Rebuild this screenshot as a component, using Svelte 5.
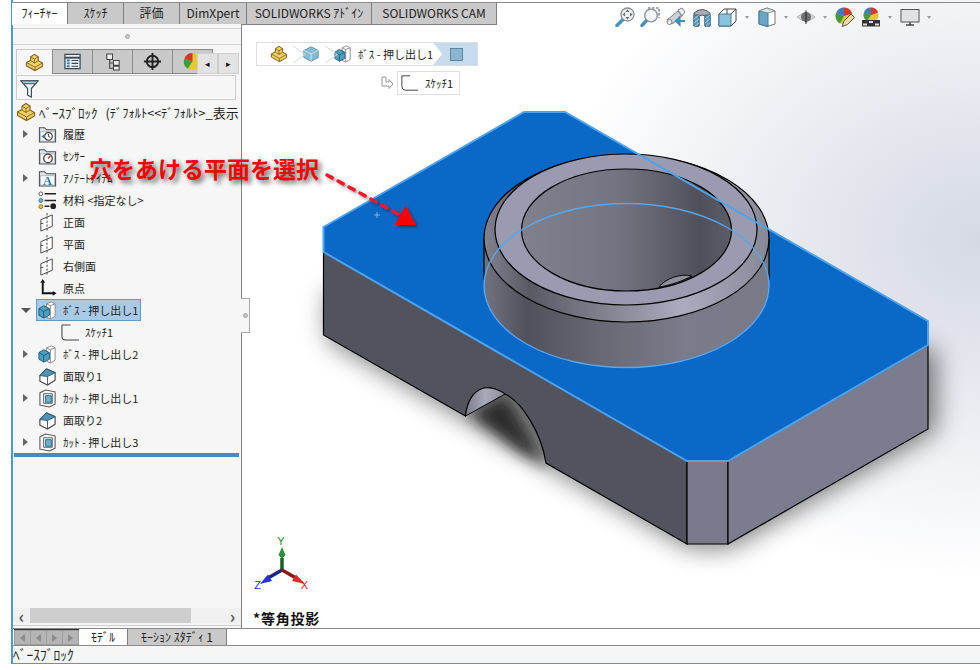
<script>
	const topTabs = ['ﾌｨｰﾁｬｰ', 'ｽｹｯﾁ', '評価', 'DimXpert', 'SOLIDWORKS ｱﾄﾞｲﾝ', 'SOLIDWORKS CAM'];
	const paneTabs = ['part', 'props', 'config', 'target', 'pie'];

	const rows = [
		{ label: '履歴', icon: 'fhist', caret: 'r' },
		{ label: 'ｾﾝｻｰ', icon: 'fsens' },
		{ label: 'ｱﾉﾃｰﾄｱｲﾃﾑ', icon: 'fanno', caret: 'r' },
		{ label: '材料 <指定なし>', icon: 'material' },
		{ label: '正面', icon: 'plane' },
		{ label: '平面', icon: 'plane' },
		{ label: '右側面', icon: 'plane' },
		{ label: '原点', icon: 'origin' },
		{ label: 'ﾎﾞｽ - 押し出し1', icon: 'boss', caret: 'd', selected: true },
		{ label: 'ｽｹｯﾁ1', icon: 'sketch', child: true },
		{ label: 'ﾎﾞｽ - 押し出し2', icon: 'boss', caret: 'r' },
		{ label: '面取り1', icon: 'chamfer' },
		{ label: 'ｶｯﾄ - 押し出し1', icon: 'cut', caret: 'r' },
		{ label: '面取り2', icon: 'chamfer' },
		{ label: 'ｶｯﾄ - 押し出し3', icon: 'cut', caret: 'r' }
	];

	const tools = [
		{ icon: 'zoomfit', w: 25 },
		{ icon: 'zoomarea', w: 26 },
		{ icon: 'prev', w: 26 },
		{ icon: 'section', w: 26 },
		{ icon: 'orient', w: 20, caret: true },
		{ icon: 'display', w: 20, caret: true },
		{ icon: 'eye', w: 20, caret: true },
		{ icon: 'appear', w: 26 },
		{ icon: 'scene', w: 20, caret: true },
		{ icon: 'monitor', w: 20, caret: true }
	];
</script>

{#snippet ic(k)}
	<svg class="ic" viewBox="0 0 20 20">
		{#if k === 'part'}
			<path d="M1.500 10 L6 7.500 L6 4 L10 1.500 L14 4 L14 8 L18.500 10.500 L18.500 14 L10.500 18.500 L1.500 13.500Z" fill="#f2cf62" stroke="#7d6220" stroke-width="1.100" />
			<path d="M6 4 L10 6.500 L14 4 M10 6.500 L10 10.500 L6 8 M10 10.500 L14 8 M1.500 10 L10.500 15 L18.500 10.500 M10.500 15 L10.500 18.500" fill="none" stroke="#7d6220" stroke-width="0.900" />
		{:else if k === 'props'}
			<rect x="2" y="2.500" width="16" height="15" fill="#e8eef4" stroke="#3c4a56" stroke-width="1.300" />
			<path d="M2 6 H18" stroke="#3c4a56" stroke-width="2" />
			<path d="M4 9 H7 M4 12 H7 M4 15 H7" stroke="#2c7fb0" stroke-width="2" />
			<path d="M9 9 H16 M9 12 H16 M9 15 H16" stroke="#3c4a56" stroke-width="1.200" />
		{:else if k === 'config'}
			<path d="M4 2 H10 V8 H4Z M11 9 H17 V14 H11Z M11 15 H17 V19 H11Z" fill="#eee" stroke="#444" stroke-width="1.100" />
			<path d="M7 8 V17 H11 M7 11.500 H11" fill="none" stroke="#444" stroke-width="1.100" />
		{:else if k === 'target'}
			<circle cx="10" cy="10" r="6" fill="none" stroke="#222" stroke-width="2" />
			<path d="M10 1 V19 M1 10 H19" stroke="#222" stroke-width="2" />
		{:else if k === 'pie'}
			<circle cx="10" cy="10" r="9" fill="#e8c92e" />
			<path d="M10 10 L10 1 A9 9 0 0 0 1.500 7Z" fill="#d9352a" />
			<path d="M10 10 L1.500 7 A9 9 0 0 0 5 17.500Z" fill="#3f9b3c" />
		{:else if k === 'fhist' || k === 'fsens' || k === 'fanno'}
			<path d="M1.500 18 V3 H7 L9 5 H18.500 V18Z" fill="#dfe3e8" stroke="#4b4f55" stroke-width="1.100" />
			<path d="M2.500 7 H17.500 V17 H2.500Z" fill="#f6f7f8" stroke="#8b9097" stroke-width="0.600" />
			{#if k === 'fhist'}
				<circle cx="11" cy="12" r="4" fill="#fff" stroke="#333" stroke-width="1.200" />
				<path d="M11 9.500 V12 L13 13" fill="none" stroke="#333" />
				<path d="M3.500 12 L7 9.500 V14.500Z" fill="#2d7fae" />
			{:else if k === 'fsens'}
				<circle cx="10.500" cy="12" r="4.500" fill="#fff" stroke="#333" stroke-width="1.300" />
				<path d="M10.500 12 L13 9.500" stroke="#d0392b" stroke-width="1.500" />
			{:else}
				<text x="10" y="17" class="ic-a">A</text>
			{/if}
		{:else if k === 'material'}
			<circle cx="3" cy="3" r="2" fill="#fff" stroke="#555" />
			<circle cx="3" cy="10" r="2" fill="#7fb6d8" stroke="#3a6f92" />
			<circle cx="3" cy="16.500" r="2" fill="#edc93c" stroke="#8a7414" />
			<path d="M7 3 H19 M7 10 H19 M7 16 H12" stroke="#222" stroke-width="1.600" />
			<circle cx="16" cy="16" r="3" fill="#222" />
		{:else if k === 'plane'}
			<path d="M3 7 L15 2 V14 L3 19Z" fill="#fff" stroke="#444" />
			<path d="M9.500 0 V20 M3 11 H6" stroke="#444" stroke-dasharray="2.500 1.500" />
		{:else if k === 'origin'}
			<path d="M5 2 V15 H18" fill="none" stroke="#111" stroke-width="2" />
			<path d="M5 0 L2.500 4 H7.500Z M19.500 15 L15.500 12.500 V17.500Z" fill="#111" />
		{:else if k === 'boss'}
			<path d="M9 3 L14 1 L18 3 V16 L13 19 L9 17Z" fill="#fff" stroke="#8a8a8a" />
			<path d="M13 5 V19 M9 3 L13 5 L18 3" fill="none" stroke="#8a8a8a" />
			<path d="M1 8 L6 5 L12 8 V15 L6 18 L1 15Z" fill="#4f9fc0" stroke="#1f5d7a" />
			<path d="M1 8 L6 11 L12 8 M6 11 V18" fill="none" stroke="#1f5d7a" />
		{:else if k === 'sketch'}
			<path d="M1 2 V14 Q1 18 5 18 H19 M1 2 H10" fill="none" stroke="#444" stroke-width="1.100" />
		{:else if k === 'chamfer'}
			<path d="M2 9 L9 2 L18 6 V14 L10 19 L2 15Z" fill="#fff" stroke="#444" stroke-width="1.200" />
			<path d="M2 9 L9 2 L18 6 L10 10Z" fill="#4f94b8" stroke="#2a5c78" />
			<path d="M10 10 V19" stroke="#555" />
		{:else if k === 'cut'}
			<path d="M2 4 L8 1 L18 3 V16 L12 19 L2 17Z" fill="#f6f6f6" stroke="#555" stroke-width="1.100" />
			<path d="M6 5 H15 V15 H6Z" fill="#fff" stroke="#555" />
			<path d="M8 7 H14 V14 H8Z" fill="#6fb0cd" stroke="#2a6a8a" />
		{:else if k === 'cube'}
			<path d="M2 6 L10 2 L18 6 V14 L10 18 L2 14Z" fill="#83bcd6" stroke="#5d93ad" />
			<path d="M2 6 L10 10 L18 6 M10 10 V18" fill="none" stroke="#d5e9f2" />
		{:else if k === 'square'}
			<rect x="3" y="3" width="14" height="14" fill="#8ab7cf" stroke="#4f7d96" />
		{:else if k === 'zoomfit'}
			<path d="M8 12.500 L2 18.500" stroke="#4b93b8" stroke-width="3.500" stroke-linecap="round" />
			<circle cx="12.500" cy="7.500" r="6.500" fill="#eef0f2" stroke="#87909a" stroke-width="1.300" />
			<path d="M12.500 2.500 L14.500 5 H10.500Z M12.500 12.500 L14.500 10 H10.500Z M7.500 7.500 L10 5.500 V9.500Z M17.500 7.500 L15 5.500 V9.500Z" fill="#666" />
		{:else if k === 'zoomarea'}
			<path d="M8 1 H19 V11" fill="none" stroke="#555" stroke-width="1.100" stroke-dasharray="2.500 1.500" />
			<path d="M7 13 L2 18.500" stroke="#4b93b8" stroke-width="3.500" stroke-linecap="round" />
			<circle cx="11" cy="8.500" r="6.300" fill="#f4f5f6" stroke="#87909a" stroke-width="1.300" />
		{:else if k === 'prev'}
			<path d="M1 13 L12 4 L16 9 L6 17Z" fill="#cfd2d5" stroke="#7a7f84" />
			<path d="M12 3 L16 1 L19 5 L16 9Z" fill="#eceeef" stroke="#7a7f84" />
			<circle cx="3.500" cy="15" r="2.500" fill="#eee" stroke="#7a7f84" />
			<path d="M10 14 H19 M10 14 L13.500 10.500 V17.500Z" fill="#3f8fb8" stroke="#3f8fb8" stroke-width="2" />
		{:else if k === 'section'}
			<path d="M2 6 Q10 -1 18 6 V19 H13 V9 Q10 7 7 9 V19 H2Z" fill="#a7acb1" stroke="#555" />
			<path d="M2 8 H7 V19 H2Z M13 8 H18 V19 H13Z" fill="#5f9dbd" stroke="#2f6a8a" />
			<path d="M2 12 L7 8 M2 16 L7 12 M3 19 L7 16 M13 12 L18 8 M13 16 L18 12 M14 19 L18 16" stroke="#cfe5ef" stroke-width="0.700" />
		{:else if k === 'orient'}
			<path d="M1 7 L6 2 H18 V14 L13 19 H1Z" fill="#fff" stroke="#444" />
			<path d="M1 7 H13 V19 H1Z" fill="#8cc3dc" stroke="#3e7d9c" />
			<path d="M13 7 L18 2 M13 19 L18 14 M9 2 V7" stroke="#444" />
		{:else if k === 'display'}
			<path d="M2 4 L10 1 L18 4 V17 L10 19.500 L2 17Z" fill="#fff" stroke="#777" />
			<path d="M2 4 L11 6 V19.500 L2 17Z" fill="#6aa7c6" stroke="#3f7a98" />
			<path d="M2 4 L10 1 L18 4 L11 6Z" fill="#d4e6ef" stroke="#777" stroke-width="0.700" />
		{:else if k === 'eye'}
			<path d="M1 10 Q10 2 19 10 Q10 18 1 10Z" fill="#d8d8d8" stroke="#b5b5b5" />
			<circle cx="10" cy="10" r="5" fill="#707070" />
			<path d="M10 3.500 V17" stroke="#2a2a2a" stroke-width="1.100" />
		{:else if k === 'appear'}
			<circle cx="9" cy="9" r="8.500" fill="#e7c52e" />
			<path d="M9 9 L9 0.500 A8.500 8.500 0 0 1 17 6.500Z" fill="#d9352a" />
			<path d="M9 9 L9 0.500 A8.500 8.500 0 0 0 1 6.500Z" fill="#3d7dc4" />
			<path d="M9 9 L1 6.500 A8.500 8.500 0 0 0 5 16.500Z" fill="#3f9b3c" />
			<path d="M7 19.500 L9 14 L16 7 L19.500 10.500 L12.500 17.500Z" fill="#f0d9a0" stroke="#555" />
		{:else if k === 'scene'}
			<circle cx="10" cy="8" r="7.500" fill="#e7c52e" />
			<path d="M10 8 L10 0.500 A7.500 7.500 0 0 1 17 5.500Z" fill="#d9352a" />
			<path d="M10 8 L10 0.500 A7.500 7.500 0 0 0 3 5.500Z" fill="#3d7dc4" />
			<path d="M10 8 L3 5.500 A7.500 7.500 0 0 0 6 14Z" fill="#3f9b3c" />
			<path d="M1 13 H19 V19.500 H1Z" fill="#333" />
			<path d="M2 16.500 H6 V18.500 H2Z M8 14 H12 V16 H8Z M14 16.500 H18 V18.500 H14Z" fill="#ddd" />
		{:else if k === 'monitor'}
			<rect x="1" y="2.500" width="18" height="12.500" fill="#e2e2e2" stroke="#555" />
			<path d="M6 18 H14 M10 15 V18" stroke="#444" stroke-width="1.500" />
		{/if}
	</svg>
{/snippet}

<div class="page">
	<div class="app">
		<div class="main">
			<div class="topbar">
				<div class="tabs">
					{#each topTabs as tab, i}
						<div class="tab" class:active={i === 0} class:w1={i < 3} class:w2={i === 3} class:w3={i > 3}>{tab}</div>
					{/each}
				</div>
				<div class="tools">
					{#each tools as t}
						<div class="tool" style="width: {t.w}px">{@render ic(t.icon)}</div>
						{#if t.caret}<div class="tool-caret"></div>{/if}
					{/each}
				</div>
			</div>

			<div class="body">
				<aside class="side">
					<div class="grip"><span class="dot"></span></div>
					<div class="pane-tabs">
						{#each paneTabs as p, i}
							<div class="pane-tab" class:active={i === 0}>{@render ic(p)}</div>
						{/each}
						<div class="pane-arrows">
							<div class="pane-arrow">◂</div>
							<div class="pane-arrow">▸</div>
						</div>
					</div>
					<div class="filter">
						<svg class="funnel" viewBox="0 0 20 20">
							<path d="M1 2 H19 L12 10 V19 L8 17 V10Z" fill="#eef6fa" stroke="#3f4a52" stroke-width="1.200" />
							<path d="M1 2 H19 L16 5 H4Z" fill="#9ccbe2" stroke="#3f4a52" />
						</svg>
					</div>

					<div class="root-row">
						{@render ic('part')}
						<span class="root-label">ﾍﾞｰｽﾌﾞﾛｯｸ</span>
						<span class="root-config">(ﾃﾞﾌｫﾙﾄ&lt;&lt;ﾃﾞﾌｫﾙﾄ&gt;<em>_表示状態</em></span>
					</div>

					{#each rows as row}
						<div class="row" class:child={row.child}>
							<span class="caret">
								{#if row.caret === 'r'}<i class="tri-r"></i>{:else if row.caret === 'd'}<i class="tri-d"></i>{/if}
							</span>
							<span class="row-inner" class:selected={row.selected}>
								{@render ic(row.icon)}
								<span class="row-label">{row.label}</span>
							</span>
						</div>
					{/each}
					<div class="rollback"></div>

					<div class="hscroll">
						<span class="sc-arrow">‹</span>
						<div class="sc-track"><div class="sc-thumb"></div></div>
						<span class="sc-arrow">›</span>
					</div>
					<div class="side-foot"></div>
					<div class="side-notch"><span class="dot"></span></div>
				</aside>

				<div class="canvas">
					<svg class="scene" viewBox="242 24 738 604" width="738" height="604">
						<defs>
							<filter id="soft" x="-20%" y="-20%" width="140%" height="140%"><feGaussianBlur stdDeviation="13" /></filter>
							<filter id="soft2" x="-30%" y="-30%" width="160%" height="160%"><feGaussianBlur stdDeviation="7" /></filter>
							<filter id="arrowShadow" x="-30%" y="-30%" width="160%" height="160%"><feDropShadow dx="2" dy="2" stdDeviation="1.500" flood-color="#000" flood-opacity="0.400" /></filter>
							<linearGradient id="sideG" x1="484" x2="769" y1="0" y2="0" gradientUnits="userSpaceOnUse">
								<stop offset="0" stop-color="#72737f" />
								<stop offset="0.150" stop-color="#50515b" />
								<stop offset="0.400" stop-color="#676873" />
								<stop offset="0.700" stop-color="#7b7c8b" />
								<stop offset="1" stop-color="#797a88" />
							</linearGradient>
							<linearGradient id="rimG" x1="484" x2="769" y1="0" y2="0" gradientUnits="userSpaceOnUse">
								<stop offset="0" stop-color="#82838f" />
								<stop offset="0.160" stop-color="#585963" />
								<stop offset="0.420" stop-color="#81828f" />
								<stop offset="0.700" stop-color="#abacbe" />
								<stop offset="1" stop-color="#878897" />
							</linearGradient>
							<linearGradient id="holeG" x1="521" x2="732" y1="0" y2="0" gradientUnits="userSpaceOnUse">
								<stop offset="0" stop-color="#80818f" />
								<stop offset="0.450" stop-color="#747582" />
								<stop offset="0.850" stop-color="#4f505a" />
								<stop offset="1" stop-color="#5c5d68" />
							</linearGradient>
							<linearGradient id="archG" x1="466" x2="505" y1="0" y2="0" gradientUnits="userSpaceOnUse">
								<stop offset="0" stop-color="#7d7e8c" />
								<stop offset="0.500" stop-color="#a9aaba" />
								<stop offset="1" stop-color="#8d8e9d" />
							</linearGradient>
						</defs>

						<!-- ground shadow -->
						<path d="M328 290 L328 340 L690 548 L730 548 L936 430 L936 350Z" fill="#000" opacity="0.520" filter="url(#soft)" />
						<path d="M470 414 L505 396 L548 466 L520 452Z" fill="#1c1c1c" opacity="0.850" filter="url(#soft2)" />

						<!-- lower faces -->
						<path d="M323.500 252 L687 461 L687 544 L546 463 C541 432 522 402 505 394 C496 388 488 387 484 388 C473 391 467 402 465.500 416 L323.500 335Z" fill="#52535d" stroke="#000" stroke-width="1.200" />
						<path d="M465.500 416 C467 402 473 391 484 388 C492 387 499 390 505 394Z" fill="url(#archG)" stroke="#000" stroke-width="1" />
						<path d="M687 461 H728 V544 H687Z" fill="#797a8b" stroke="#000" stroke-width="1.200" />
						<path d="M728 461 L928 345 V429 L728 544Z" fill="#7b7c8e" stroke="#000" stroke-width="1.200" />

						<!-- selected top face -->
						<path d="M323.500 227 L524 112 H565 L928 321 V345 L728 461 H687 L323.500 252Z" fill="#0a68c7" />

						<!-- boss -->
						<ellipse cx="626.500" cy="285.500" rx="142.500" ry="82" fill="url(#sideG)" />
						<rect x="484" y="238" width="285" height="48" fill="url(#sideG)" />
						<path d="M484 238 V280 M769 238 V280" stroke="#000" stroke-width="1.200" />
						<ellipse cx="626.500" cy="238.500" rx="142.500" ry="83.500" fill="url(#rimG)" stroke="#000" stroke-width="1.200" />
						<ellipse cx="626" cy="229.500" rx="131" ry="75.500" fill="#9a9bb0" stroke="#000" stroke-width="1.200" />
						<ellipse cx="626.500" cy="230" rx="105" ry="61" fill="url(#holeG)" stroke="#000" stroke-width="1.200" />
						<path d="M659 287 C665 279 680 273 692 276 C682 281 672 285 659 287Z" fill="#8f909e" stroke="#000" stroke-width="0.900" />

						<!-- selection highlight -->
						<ellipse cx="626.500" cy="285.500" rx="142.500" ry="82" fill="none" stroke="#55a7f2" stroke-width="1.400" />
						<path d="M323.500 227 L524 112 H565 L928 321 V345 L728 461 H687 L323.500 252Z" fill="none" stroke="#4ea3ee" stroke-width="2" />
						<path d="M374 215 H380 M377 212 V218" stroke="#8cc4f5" stroke-width="0.800" />

						<!-- annotation arrow -->
						<g filter="url(#arrowShadow)">
							<path d="M327 175 L400 215" stroke="#f5152c" stroke-width="3.500" stroke-dasharray="6 6.500" stroke-linecap="round" fill="none" />
							<path d="M405.500 205.500 L416 225 H394.500Z" fill="#ff0000" />
						</g>

						<!-- triad -->
						<g>
							<path d="M282 570 V558" stroke="#135f22" stroke-width="3.500" />
							<path d="M282 547 L285.500 555 L282 559 L278.500 555Z" fill="#2f8f3c" />
							<path d="M282 570 L268 578" stroke="#1a2590" stroke-width="3.500" />
							<path d="M260 584 L268 574.500 L272 581Z" fill="#2530d8" />
							<path d="M282 570 L296 578" stroke="#8f1818" stroke-width="3.500" />
							<path d="M305 584 L296 574.500 L292 581Z" fill="#d82c2c" />
							<text x="281" y="545" class="axis y">Y</text>
							<text x="257.500" y="589" class="axis z">Z</text>
							<text x="304.500" y="589" class="axis x">X</text>
						</g>
					</svg>

					<div class="hud">
						<div class="crumbs">
							<span class="crumb">{@render ic('part')}</span>
							<i class="chev"></i>
							<span class="crumb">{@render ic('cube')}</span>
							<i class="chev"></i>
							<span class="crumb c3">{@render ic('boss')}<b>ﾎﾞｽ - 押し出し1</b></span>
							<span class="crumb last">{@render ic('square')}</span>
						</div>
						<div class="sub-crumb">
							<svg class="hop" viewBox="0 0 14 14"><path d="M2 1 H6 V6 H9 V3.500 L13 8 L9 12.500 V10 H2Z" fill="#fff" stroke="#999" /></svg>
							<div class="sketch-box">{@render ic('sketch')}<span>ｽｹｯﾁ1</span></div>
						</div>
					</div>

					<div class="view-name">*等角投影</div>
				</div>
			</div>

			<div class="bottom-tabs">
				<div class="nav-btns">
					<span class="nav-btn"><i class="nav-l"></i></span>
					<span class="nav-btn"><i class="nav-l"></i></span>
					<span class="nav-btn"><i class="nav-r"></i></span>
					<span class="nav-btn"><i class="nav-r"></i></span>
				</div>
				<div class="btab active">ﾓﾃﾞﾙ</div>
				<div class="btab">ﾓｰｼｮﾝ ｽﾀﾃﾞｨ 1</div>
			</div>
			<div class="status">ﾍﾞｰｽﾌﾞﾛｯｸ</div>
		</div>

		<div class="callout">穴をあける平面を選択</div>
	</div>
</div>

<style>
	:global(body) {
		margin: 0;
		background: #fff;
	}

	.page {
		width: 980px;
		height: 670px;
		overflow: hidden;
		font-family: "Noto Sans CJK JP", "Liberation Sans", sans-serif;
		color: #222;
	}

	.app {
		position: relative;
		margin-left: 11px;
		width: 969px;
		height: 664px;
		border-left: 2px solid #4a9bd4;
		border-bottom: 1px solid #4a9bd4;
		box-sizing: border-box;
	}

	.main {
		height: 100%;
		display: flex;
		flex-direction: column;
		background: radial-gradient(ellipse 430px 340px at 100% 240px, #d5d9e4, #fff);
	}

	/* top tabs + view toolbar */
	.topbar {
		display: flex;
		height: 22px;
		margin-top: 2px;
		flex: none;
		border-top: 1px solid #8a8a8a;
		box-sizing: border-box;
	}

	.tabs {
		display: flex;
		height: 22px;
		margin-left: -1px;
	}

	.tab {
		box-sizing: border-box;
		border-right: 1px solid #7f7f7f;
		border-bottom: 1px solid #7f7f7f;
		background: #c9c9c9;
		font-size: 12px;
		line-height: 20px;
		text-align: center;
		color: #222;
	}

	.tab.active {
		background: #fff;
		border-bottom: none;
	}

	.w1 { width: 56px; }
	.w2 { width: 67px; }
	.w3 { width: 125px; }

	.tools {
		display: flex;
		align-items: center;
		margin-left: 118px;
		height: 28px;
	}

	.tool {
		flex: none;
	}

	.tool .ic {
		display: block;
		width: 20px;
		height: 20px;
	}

	.tool-caret {
		flex: none;
		width: 0;
		height: 0;
		margin-right: 8px;
		margin-left: 7px;
		border-left: 2.500px solid transparent;
		border-right: 2.500px solid transparent;
		border-top: 3px solid #999;
	}

	.body {
		flex: 1;
		display: flex;
		min-height: 0;
	}

	/* feature manager */
	.side {
		position: relative;
		flex: none;
		width: 229px;
		box-sizing: border-box;
		background: #f6f6f6;
		border-right: 1px solid #7f7f7f;
		display: flex;
		flex-direction: column;
	}

	.grip {
		margin-top: 4px;
		height: 15px;
		border-top: 1px solid #d2d2d2;
		border-bottom: 1px solid #d2d2d2;
		display: flex;
		align-items: center;
		justify-content: center;
	}

	.dot {
		width: 5px;
		height: 5px;
		border-radius: 50%;
		background: #c4c4c4;
		border: 1px solid #aaa;
		box-sizing: border-box;
	}

	.pane-tabs {
		position: relative;
		display: flex;
		margin: 4px 0 0 3px;
		height: 25px;
	}

	.pane-tab {
		box-sizing: border-box;
		width: 40px;
		height: 25px;
		background: #c9c9c9;
		border: 1px solid #8a8a8a;
		border-left: none;
		display: flex;
		align-items: center;
		justify-content: center;
	}

	.pane-tab.active {
		width: 37px;
		background: #f6f6f6;
		border-left: 1px solid #c8c8c8;
		border-top-color: #c8c8c8;
		border-bottom: none;
	}

	.pane-tab .ic {
		width: 19px;
		height: 19px;
	}

	.pane-arrows {
		position: absolute;
		left: 181px;
		top: 4px;
		display: flex;
	}

	.pane-arrow {
		box-sizing: border-box;
		width: 21px;
		height: 21px;
		background: #e3e3e3;
		border: 1px solid #cfcfcf;
		font-size: 9px;
		line-height: 19px;
		text-align: center;
		color: #111;
	}

	.filter {
		box-sizing: border-box;
		margin: 1px 5px 0 3px;
		height: 25px;
		border: 1px solid #cfcfcf;
		padding: 3px;
	}

	.funnel {
		display: block;
		width: 19px;
		height: 19px;
	}

	.root-row {
		height: 22px;
		margin-top: 1px;
		flex: none;
		display: flex;
		align-items: center;
		padding-left: 3px;
		white-space: nowrap;
		overflow: hidden;
		margin-right: 3px;
	}

	.root-row .ic {
		width: 20px;
		height: 20px;
		flex: none;
	}

	.root-label {
		margin-left: 3px;
		font-size: 13px;
	}

	.root-config {
		margin-left: 8px;
		font-size: 12.500px;
	}

	.root-config em {
		font-style: normal;
		font-size: 13px;
	}

	.row {
		height: 22px;
		flex: none;
		display: flex;
		align-items: center;
	}

	.caret {
		width: 23px;
		flex: none;
		display: flex;
		justify-content: center;
		padding-left: 2px;
		box-sizing: border-box;
	}

	.tri-r {
		width: 0;
		height: 0;
		border-top: 4px solid transparent;
		border-bottom: 4px solid transparent;
		border-left: 5px solid #666;
	}

	.tri-d {
		width: 0;
		height: 0;
		border-left: 5px solid transparent;
		border-right: 5px solid transparent;
		border-top: 5px solid #555;
	}

	.row-inner {
		box-sizing: border-box;
		display: flex;
		align-items: center;
		height: 22px;
		width: 105px;
		padding-left: 2px;
		white-space: nowrap;
	}

	.row-inner .ic {
		width: 19px;
		height: 19px;
		flex: none;
	}

	.row-inner.selected {
		background: #a8cae6;
		outline: 1px solid #5b9bca;
		outline-offset: -1px;
	}

	.row-label {
		margin-left: 6px;
		font-size: 11px;
	}

	.child .row-inner {
		padding-left: 25px;
		width: auto;
	}

	.child .row-label {
		margin-left: 5px;
		font-size: 11px;
	}

	.rollback {
		height: 4px;
		margin: 0 2px 0 1px;
		flex: none;
		background: #3a8fc4;
	}

	.hscroll {
		margin-top: auto;
		margin-bottom: 2px;
		height: 15px;
		flex: none;
		display: flex;
		align-items: center;
		background: #f0f0f0;
	}

	.side-foot {
		flex: none;
		height: 3px;
		box-sizing: border-box;
		border-top: 1px solid #cfcfcf;
	}

	.sc-arrow {
		width: 17px;
		flex: none;
		text-align: center;
		font-size: 17px;
		font-weight: bold;
		line-height: 15px;
		color: #555;
	}

	.sc-track {
		flex: 1;
		height: 15px;
	}

	.sc-thumb {
		width: 161px;
		height: 15px;
		background: #cdcdcd;
	}

	.side-notch {
		position: absolute;
		right: -9px;
		top: 274px;
		width: 9px;
		height: 35px;
		box-sizing: border-box;
		background: #f6f6f6;
		border: 1px solid #aaa;
		border-left: none;
		display: flex;
		align-items: center;
		justify-content: center;
	}

	/* graphics area */
	.canvas {
		position: relative;
		flex: 1;
		min-width: 0;
	}

	.scene {
		position: absolute;
		left: 0;
		top: 0;
		display: block;
	}

	.axis {
		font-family: "Liberation Sans", sans-serif;
		font-size: 11px;
		text-anchor: middle;
	}

	.axis.y { fill: #1d8a33; }
	.axis.z { fill: #2233dd; }
	.axis.x { fill: #e01b1b; }

	.hud {
		position: absolute;
		left: 14px;
		top: 18px;
	}

	.crumbs {
		box-sizing: border-box;
		width: 222px;
		height: 24px;
		display: flex;
		align-items: center;
		background: #fff;
		border: 1px solid #dedede;
		padding-left: 13px;
	}

	.crumb {
		display: flex;
		align-items: center;
	}

	.crumb .ic {
		width: 18px;
		height: 18px;
		flex: none;
	}

	.chev {
		width: 15px;
		height: 15px;
		margin: 0 1px 0 -2px;
		box-sizing: border-box;
		border-top: 1px solid #d8d8d8;
		border-right: 1px solid #d8d8d8;
		transform: rotate(45deg) skew(-10deg, -10deg);
	}

	.c3 b {
		font-weight: 400;
		font-size: 11px;
		margin-left: 6px;
		white-space: nowrap;
	}

	.last {
		margin-left: auto;
		width: 44px;
		height: 22px;
		background: #c6dbec;
		clip-path: polygon(0 0, 100% 0, 100% 100%, 0 100%, 9px 50%);
		justify-content: center;
	}

	.last .ic {
		width: 17px;
		height: 17px;
		margin-left: 2px;
	}

	.sub-crumb {
		display: flex;
		align-items: center;
		margin: 5px 0 0 124px;
	}

	.hop {
		width: 14px;
		height: 14px;
	}

	.sketch-box {
		box-sizing: border-box;
		margin-left: 3px;
		width: 63px;
		height: 24px;
		background: #fff;
		border: 1px solid #dedede;
		display: flex;
		align-items: center;
		padding-left: 3px;
		font-size: 11px;
		white-space: nowrap;
	}

	.sketch-box .ic {
		width: 18px;
		height: 18px;
		margin-right: 6px;
		flex: none;
	}

	.view-name {
		position: absolute;
		left: 11px;
		bottom: 1px;
		font-size: 14px;
		font-weight: 700;
		letter-spacing: 0.800px;
		line-height: 18px;
		color: #111;
	}

	.callout {
		position: absolute;
		left: 76px;
		top: 152px;
		font-size: 23px;
		font-weight: 700;
		line-height: 32px;
		color: #f80000;
		white-space: nowrap;
		text-shadow: 3px 3px 5px rgba(0, 0, 0, 0.6);
	}

	/* bottom tabs + status */
	.bottom-tabs {
		flex: none;
		height: 17px;
		display: flex;
		box-sizing: border-box;
		border-top: 1px solid #8a8a8a;
		background: #fff;
	}

	.nav-btns {
		display: flex;
		width: 65px;
		margin-left: 1px;
		background: #9d9d9d;
		border-top: 1px solid #333;
		gap: 1px;
		padding: 1px;
		box-sizing: border-box;
	}

	.nav-btn {
		flex: 1;
		background: #b5b5b5;
		display: flex;
		align-items: center;
		justify-content: center;
	}

	.nav-l {
		border-top: 4px solid transparent;
		border-bottom: 4px solid transparent;
		border-right: 5px solid #8c8c8c;
	}

	.nav-r {
		border-top: 4px solid transparent;
		border-bottom: 4px solid transparent;
		border-left: 5px solid #8c8c8c;
	}

	.btab {
		box-sizing: border-box;
		width: 100px;
		background: #c9c9c9;
		border-right: 1px solid #7f7f7f;
		font-size: 12px;
		line-height: 15px;
		text-align: center;
		border-left: 1px solid #7f7f7f;
		white-space: nowrap;
	}

	.btab.active {
		width: 48px;
		background: #fff;
		border: none;
	}

	.status {
		flex: none;
		height: 18px;
		box-sizing: border-box;
		border-top: 1px solid #8a8a8a;
		background: #f6f6f6;
		font-size: 13.500px;
		line-height: 17px;
		padding-left: 0;
	}

	.ic-a {
		font-family: "Liberation Serif", serif;
		font-weight: 700;
		font-size: 13px;
		text-anchor: middle;
		fill: #2a7fb0;
	}
</style>
